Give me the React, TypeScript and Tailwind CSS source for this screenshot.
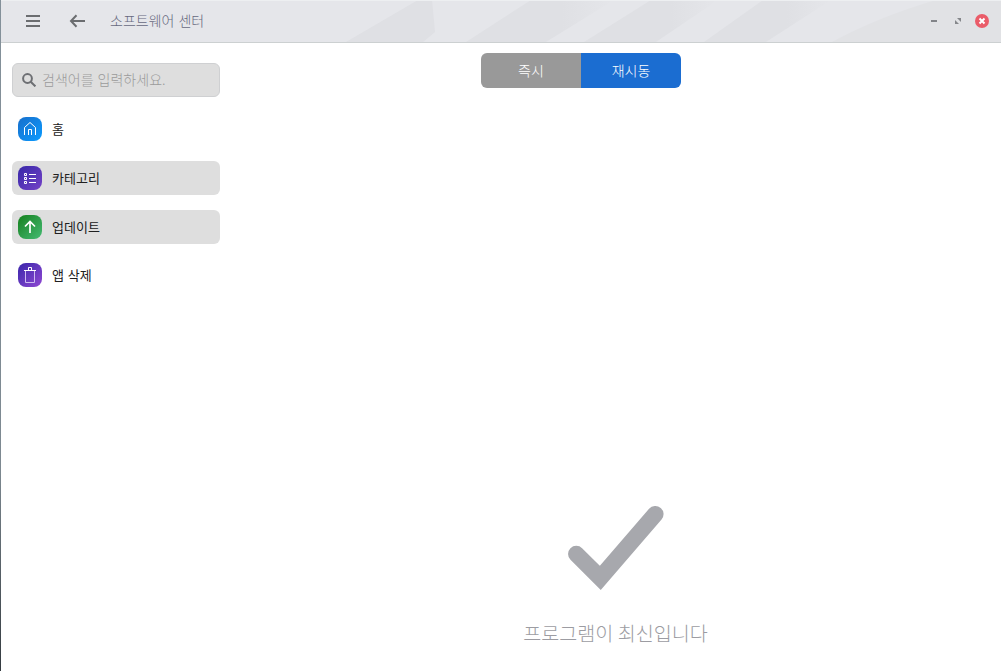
import type { ReactNode } from "react";

function HeaderPattern() {
  return (
    <svg className="pointer-events-none absolute inset-0" width="1000" height="42" viewBox="0 0 1000 42" aria-hidden="true">
      <defs>
        <linearGradient id="fade" x1="0" x2="1" y1="0" y2="0">
          <stop offset="0" stopColor="#dfe0e4" />
          <stop offset="0.65" stopColor="#dfe0e4" />
          <stop offset="1" stopColor="#dfe0e4" stopOpacity="0" />
        </linearGradient>
      </defs>
      <path d="M345 42 417 0H431L434 32 422 42Z" fill="#dfe0e4" />
      <path d="M465 42 530 0H613L545 42Z" fill="url(#fade)" />
      <path d="M583 42 650 0H717L655 42Z" fill="url(#fade)" />
      <path d="M703 42 762 0H830L765 42Z" fill="url(#fade)" />
      <path d="M831 42 Q877 17 935 0H1000V42Z" fill="#e1e2e5" />
      <path d="M0 0.5H1000" stroke="#edeff1" />
    </svg>
  );
}

function NavItem({ label, active, tile, children }: { label: string; active?: boolean; tile: string; children: ReactNode }) {
  return (
    <button className={`flex h-[34px] w-full items-center gap-2.5 rounded-md px-1.5 text-left ${active ? "bg-[#dedede]" : ""}`}>
      <span className={`flex size-6 shrink-0 items-center justify-center rounded-[8px] bg-linear-to-br ${tile}`}>
        <svg width="24" height="24" viewBox="0 0 24 24" fill="none" stroke="#fff">{children}</svg>
      </span>
      <span className="pb-px text-[13px] leading-5 font-normal text-[#202020] [word-spacing:1px]">{label}</span>
    </button>
  );
}

export default function App() {
  return (
    <div className="flex h-[671px] w-[1001px] overflow-hidden bg-white font-['Noto_Sans_CJK_KR',sans-serif] font-light">
      <div className="w-px shrink-0 bg-linear-to-b from-[#84919a] via-[#7d8991] via-70% to-[#343b40]" />
      <div className="flex min-w-0 flex-1 flex-col">
        <header className="relative flex h-[43px] shrink-0 items-center border-b border-[#ccd0d1] bg-[#e5e6ea]">
          <HeaderPattern />
          <div className="relative flex w-full items-center pl-[25px] pr-3">
            <button aria-label="메뉴">
              <svg className="block" width="14" height="14" viewBox="0 0 14 14" stroke="#6b6d70" strokeWidth="2">
                <path d="M0 2H14M0 7H14M0 12H14" />
              </svg>
            </button>
            <button aria-label="뒤로" className="ml-[29px]">
              <svg className="block" width="17" height="14" viewBox="0 0 17 14" fill="none" stroke="#6b6d70" strokeWidth="2">
                <path d="M2 7H16M7.5 1.2 2 7 7.5 12.8" />
              </svg>
            </button>
            <h1 className="ml-6 pb-0.5 text-[14px] leading-5 text-[#67697e] [word-spacing:1px]">소프트웨어 센터</h1>
            <div className="ml-auto flex items-center">
              <button aria-label="최소화">
                <svg className="block" width="7" height="8" viewBox="0 0 7 8"><path d="M0 4H6" stroke="#828488" strokeWidth="2" /></svg>
              </button>
              <button aria-label="최대화" className="ml-[17px]">
                <svg className="block" width="7" height="8" viewBox="0 0 7 8" fill="#85878b"><path d="M2 1H6V5ZM0 3V7H4Z" /></svg>
              </button>
              <button aria-label="닫기" className="ml-[13px]">
                <svg className="block" width="14" height="14" viewBox="0 0 14 14">
                  <circle cx="7" cy="7" r="7" fill="#ea5c69" />
                  <path d="M4.5 4.5 9.5 9.5M9.5 4.5 4.5 9.5" stroke="#fff" strokeWidth="2" />
                </svg>
              </button>
            </div>
          </div>
        </header>
        <div className="flex min-h-0 flex-1">
          <aside className="flex w-[230px] shrink-0 flex-col gap-[15px] pl-[11px] pr-[11px] pt-5">
            <div className="flex h-[34px] items-center gap-1.5 rounded-md border border-[#cfd0d2] bg-[#dedede] pl-[9px]">
              <svg width="14" height="14" viewBox="0 0 14 14" fill="none" stroke="#6d6f73" strokeWidth="2">
                <circle cx="5.5" cy="5.5" r="4.4" />
                <path d="m8.7 8.7 4.7 4.7" />
              </svg>
              <span className="pb-0.5 text-[14px] leading-5 text-[#9b9b9b] [word-spacing:1px]">검색어를 입력하세요.</span>
            </div>
            <NavItem label="홈" tile="from-[#176fcb] to-[#079bff]">
              <path d="M6.5 18V10.5L12 5.5 17.5 10.5V18M10.5 18V12.5H13.5V18" />
            </NavItem>
            <NavItem label="카테고리" active tile="from-[#3726a8] to-[#7542c7]">
              <path d="M6.5 7.5H8.5V9.5H6.5ZM6.5 11.5H8.5V13.5H6.5ZM6.5 15.5H8.5V17.5H6.5ZM11 8.5H18M11 12.5H18M11 16.5H18" />
            </NavItem>
            <NavItem label="업데이트" active tile="from-[#138018] to-[#45bb72]">
              <path d="M12 18V7M7 11.5 12 6.5 17 11.5" strokeWidth="1.7" />
            </NavItem>
            <div className="-mt-px">
              <NavItem label="앱 삭제" tile="from-[#3924aa] to-[#9147d3]">
                <path d="M6 7.5H18M10.5 7.5V4.5H13.5V7.5" />
                <path d="M7.5 8V19.5H16.5V8" stroke="#cdbbf0" />
              </NavItem>
            </div>
          </aside>
          <main className="flex flex-1 flex-col items-center pt-2.5 pr-px">
            <div className="mr-[69px] flex h-[35px] w-[200px] overflow-hidden rounded-md text-[14px] leading-5 text-white">
              <button className="flex-1 bg-[#999999] pb-0.5">즉시</button>
              <button className="flex-1 bg-[#1b6dd1] pb-0.5">재시동</button>
            </div>
            <svg className="mt-[417px] block" width="97" height="86" viewBox="0 0 97 86" fill="none">
              <path d="M9.3 49 33.3 72.8 88.3 9.2" stroke="#a7a8ad" strokeWidth="16.5" strokeLinecap="round" strokeLinejoin="miter" />
            </svg>
            <p className="mt-7 text-[19.6px] leading-7 text-[#9c9ca2]">프로그램이 최신입니다</p>
          </main>
        </div>
      </div>
    </div>
  );
}
